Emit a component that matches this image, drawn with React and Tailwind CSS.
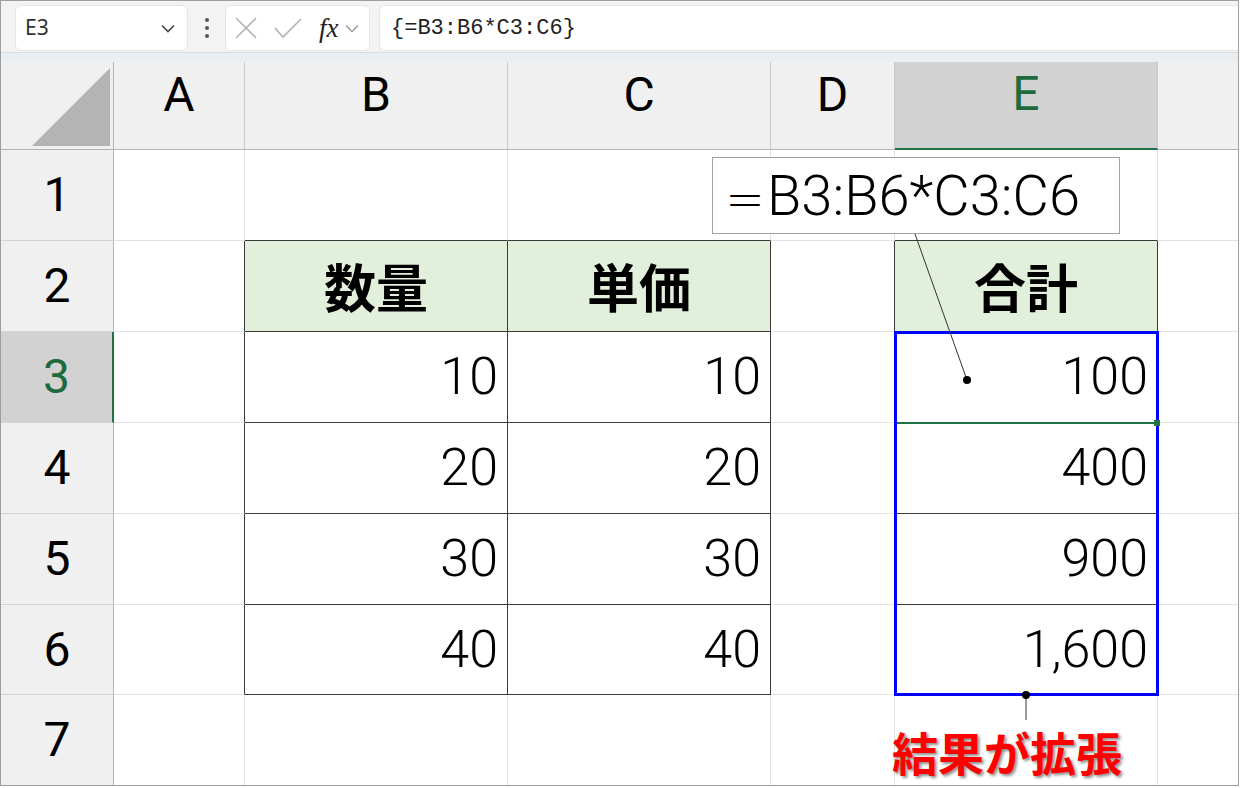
import React from 'react';

const COLS = ['A', 'B', 'C', 'D', 'E', 'F'];
const ROWS = [1, 2, 3, 4, 5, 6, 7];

const DATA = {
  '2-2': '数量', '2-3': '単価', '2-5': '合計',
  '3-2': '10', '3-3': '10', '3-5': '100',
  '4-2': '20', '4-3': '20', '4-5': '400',
  '5-2': '30', '5-3': '30', '5-5': '900',
  '6-2': '40', '6-3': '40', '6-5': '1,600',
};

const inTable = (r, c) => r >= 2 && r <= 6 && (c === 2 || c === 3 || c === 5);

function Cell({ r, c }) {
  const text = DATA[`${r}-${c}`];
  const head = r === 2 && inTable(r, c);
  const rightDark = inTable(r, c) || inTable(r, c + 1);
  const bottomDark = inTable(r, c) || inTable(r + 1, c);

  const rb = c === 6 ? '' : rightDark ? 'border-r border-r-[#3a3a3a]' : 'border-r border-r-[#e1e1e1]';
  const bb = r === 7 ? '' : bottomDark ? 'border-b border-b-[#3a3a3a]' : 'border-b border-b-[#e1e1e1]';

  return (
    <div className={`${rb} ${bb} ${head ? 'bg-[#e2efda] justify-center' : 'bg-white justify-end pr-[9px]'} flex items-center`}>
      {text && (head ? (
        <span className="text-[52px] font-bold text-black leading-none font-['Noto_Sans_CJK_JP',sans-serif]">{text}</span>
      ) : (
        <span className="text-[52px] font-light text-black leading-none font-['Roboto',sans-serif]">{text}</span>
      ))}
    </div>
  );
}

function Toolbar() {
  return (
    <div className="h-[61px] flex flex-col shrink-0">
      <div className="h-[51px] bg-[#f3f3f3] flex items-start pt-[4px]">
        {/* name box */}
        <div className="ml-[14px] w-[173px] h-[46px] bg-white rounded-[6px] border border-[#e6e6e6] flex items-center justify-between pl-[9px] pr-[12px]">
          <span className="text-[21px] text-[#333] font-['Noto_Sans',sans-serif]">E3</span>
          <svg width="14" height="9" viewBox="0 0 14 9">
            <path d="M1 1.5 L7 7.5 L13 1.5" fill="none" stroke="#444" strokeWidth="1.6" />
          </svg>
        </div>
        <div className="w-[37px] h-[46px] flex flex-col items-center justify-center gap-[4px]">
          <span className="w-[4px] h-[4px] rounded-full bg-[#555]" />
          <span className="w-[4px] h-[4px] rounded-full bg-[#555]" />
          <span className="w-[4px] h-[4px] rounded-full bg-[#555]" />
        </div>
        <div className="w-[145px] h-[46px] bg-white rounded-[6px] border border-[#e6e6e6] flex items-center pl-[9px]">
          <svg width="22" height="22" viewBox="0 0 22 22">
            <path d="M1 1 L21 21 M21 1 L1 21" stroke="#b3b3b3" strokeWidth="1.6" />
          </svg>
          <svg width="28" height="22" viewBox="0 0 28 22" className="ml-[17px]">
            <path d="M1 11 L9 20 L27 2" fill="none" stroke="#b3b3b3" strokeWidth="1.6" />
          </svg>
          <span className="ml-[17px] text-[27px] italic text-[#222] font-['Liberation_Serif',serif] leading-none">fx</span>
          <svg width="14" height="9" viewBox="0 0 14 9" className="ml-[6px]">
            <path d="M1 1.5 L7 7.5 L13 1.5" fill="none" stroke="#999" strokeWidth="1.3" />
          </svg>
        </div>
        <div className="ml-[9px] flex-1 h-[46px] bg-white rounded-l-[6px] border border-r-0 border-[#e6e6e6] flex items-center pl-[11px]">
          <span className="text-[22px] text-[#222] font-['Liberation_Mono',monospace]">{'{=B3:B6*C3:C6}'}</span>
        </div>
      </div>
      <div className="h-[10px] bg-[#e8eef1] border-t border-[#d9dcde]" />
    </div>
  );
}

export default function App() {
  return (
    <div className="w-[1240px] h-[788px] bg-white relative overflow-hidden">
      <div className="w-[1239px] h-[786px] border border-[#9e9e9e] flex flex-col overflow-hidden">
        <Toolbar />

        <div className="grid grid-cols-[113px_131px_263px_263px_124px_263px_1fr] grid-rows-[88px_91px_91px_91px_91px_91px_90px_90px]">
          {/* corner */}
          <div className="bg-[#f0f0f0] border-r border-r-[#b4b4b4] border-b border-b-[#b4b4b4] flex items-end justify-end pr-[3px] pb-[3px]">
            <svg width="78" height="78" viewBox="0 0 78 78">
              <polygon points="78,0 78,78 0,78" fill="#b4b4b4" />
            </svg>
          </div>
          {/* column headers */}
          {COLS.map((col, i) => {
            const sel = col === 'E';
            return (
              <div
                key={col}
                className={`${sel ? 'bg-[#d2d2d2] text-[#1d6b3c] border-b-2 border-b-[#217346]' : 'bg-[#f0f0f0] text-black border-b border-b-[#b4b4b4]'} ${i === 5 ? '' : 'border-r border-r-[#c8c8c8]'} flex items-center justify-center pb-[22px]`}
              >
                {i < 5 && <span className="text-[48px] leading-none font-['Roboto',sans-serif]">{col}</span>}
              </div>
            );
          })}

          {ROWS.map((r) => (
            <React.Fragment key={r}>
              <div
                className={`${r === 3 ? 'bg-[#d2d2d2] text-[#1d6b3c] border-r-2 border-r-[#217346]' : 'bg-[#f0f0f0] text-black border-r border-r-[#b4b4b4]'} ${r === 7 ? '' : 'border-b border-b-[#d4d4d4]'} flex items-center justify-center`}
              >
                <span className="text-[48px] leading-none font-['Roboto',sans-serif]">{r}</span>
              </div>
              {COLS.map((col, i) => (
                <Cell key={col} r={r} c={i + 1} />
              ))}
            </React.Fragment>
          ))}
        </div>
      </div>

      {/* selection range E3:E6 */}
      <div className="absolute left-[894px] top-[331px] w-[265px] h-[365px] border-[3px] border-[#0000ff]" />
      <div className="absolute left-[897px] top-[422px] w-[258px] h-[2px] bg-[#217346]" />
      <div className="absolute left-[1154px] top-[420px] w-[6px] h-[6px] bg-[#217346]" />

      {/* formula callout */}
      <div className="absolute left-[712px] top-[157px] w-[408px] h-[77px] bg-white border border-[#a3a3a3] flex items-center pl-[12px]">
        <span className="text-[56px] font-light leading-none text-black font-['Roboto','Noto_Sans_CJK_JP',sans-serif]">
          <span className="text-[40px] mr-[2px] font-['Noto_Sans_CJK_JP',sans-serif]">＝</span>B3:B6*C3:C6
        </span>
      </div>

      <svg className="absolute left-0 top-0 pointer-events-none" width="1240" height="788" viewBox="0 0 1240 788">
        <line x1="915" y1="234" x2="967" y2="380" stroke="#333" strokeWidth="1" />
        <circle cx="967" cy="380" r="4" fill="#000" />
        <line x1="1026" y1="695" x2="1026" y2="720" stroke="#333" strokeWidth="1" />
        <circle cx="1026" cy="695" r="4" fill="#000" />
      </svg>

      <div className="absolute left-[892px] top-[728px] text-[46px] leading-none font-bold text-[#ff0000] font-['Noto_Sans_CJK_JP',sans-serif] [text-shadow:2px_2px_3px_rgba(0,0,0,0.45)]">
        結果が拡張
      </div>
    </div>
  );
}
